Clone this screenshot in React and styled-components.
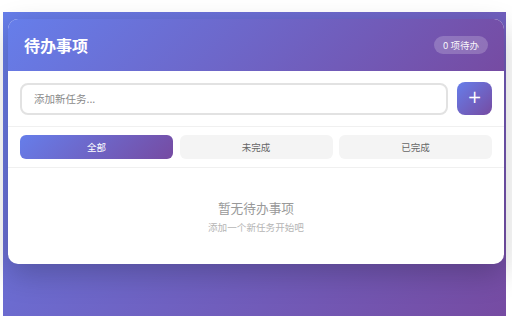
import React, { useState } from "react";
import styled, { createGlobalStyle } from "styled-components";

const Global = createGlobalStyle`
  html, body { margin: 0; padding: 0; background: #ffffff; }
  body { font-family: "Noto Sans CJK SC", "Noto Sans", sans-serif; }
  * { box-sizing: border-box; }
`;

const grad = "linear-gradient(135deg, #667eea 0%, #764ba2 100%)";

const Page = styled.div`
  width: 512px;
  height: 320px;
  padding: 12px 6px 4px 3px;
`;

const Backdrop = styled.div`
  height: 304px;
  background: ${grad};
  padding: 7px 2px 0 5px;
`;

const Card = styled.div`
  height: 245px;
  background: #fff;
  border-radius: 10px;
  overflow: hidden;
  box-shadow: 0 10px 30px rgba(0, 0, 0, 0.22);
  display: flex;
  flex-direction: column;
`;

const Header = styled.div`
  height: 52px;
  flex: none;
  background: ${grad};
  display: flex;
  align-items: center;
  justify-content: space-between;
  padding: 0 16px;
  color: #fff;
`;

const Title = styled.h1`
  margin: 0;
  font-size: 16px;
  font-weight: 700;
  line-height: 1;
`;

const Badge = styled.span`
  height: 18px;
  padding: 0 9px;
  border-radius: 9px;
  background: rgba(255, 255, 255, 0.2);
  font-size: 9.5px;
  display: flex;
  align-items: center;
  color: rgba(255, 255, 255, 0.95);
  white-space: pre;
`;

const InputRow = styled.div`
  display: flex;
  align-items: center;
  gap: 9px;
  padding: 11px 12px 11px 12px;
  border-bottom: 1px solid #f0f0f0;
`;

const TaskInput = styled.input`
  flex: 1;
  height: 32px;
  border: 2px solid #e2e2e2;
  border-radius: 8px;
  padding: 0 12px;
  font-family: inherit;
  font-size: 10.5px;
  outline: none;
  color: #333;
  &::placeholder { color: #8a8a8a; }
`;

const AddButton = styled.button`
  width: 35px;
  height: 33px;
  border: none;
  border-radius: 8px;
  background: ${grad};
  color: #fff;
  font-size: 17px;
  line-height: 1;
  font-family: "DejaVu Sans", sans-serif;
  display: flex;
  align-items: center;
  justify-content: center;
  padding: 0 0 2px 0;
`;

const FilterRow = styled.div`
  display: grid;
  grid-template-columns: repeat(3, 1fr);
  gap: 6.5px;
  padding: 8px 12px;
  border-bottom: 1px solid #f0f0f0;
`;

const FilterButton = styled.button`
  height: 24px;
  border: none;
  border-radius: 6px;
  font-family: inherit;
  font-size: 9.5px;
  background: ${(p) => (p.$active ? grad : "#f4f4f4")};
  color: ${(p) => (p.$active ? "#fff" : "#666")};
  padding: 0;
`;

const Empty = styled.div`
  flex: 1;
  display: flex;
  flex-direction: column;
  align-items: center;
  padding-top: 31px;
`;

const EmptyTitle = styled.div`
  font-size: 12.7px;
  color: #999;
  line-height: 17px;
`;

const EmptySub = styled.div`
  margin-top: 5px;
  font-size: 9.6px;
  color: #b5b5b5;
  line-height: 13px;
`;

export default function App() {
  const [filter, setFilter] = useState("all");
  const filters = [
    ["all", "全部"],
    ["active", "未完成"],
    ["done", "已完成"],
  ];
  return (
    <>
      <Global />
      <Page>
        <Backdrop>
          <Card>
            <Header>
              <Title>待办事项</Title>
              <Badge>0 项待办</Badge>
            </Header>
            <InputRow>
              <TaskInput placeholder="添加新任务..." />
              <AddButton>+</AddButton>
            </InputRow>
            <FilterRow>
              {filters.map(([k, label]) => (
                <FilterButton key={k} $active={filter === k} onClick={() => setFilter(k)}>
                  {label}
                </FilterButton>
              ))}
            </FilterRow>
            <Empty>
              <EmptyTitle>暂无待办事项</EmptyTitle>
              <EmptySub>添加一个新任务开始吧</EmptySub>
            </Empty>
          </Card>
        </Backdrop>
      </Page>
    </>
  );
}
